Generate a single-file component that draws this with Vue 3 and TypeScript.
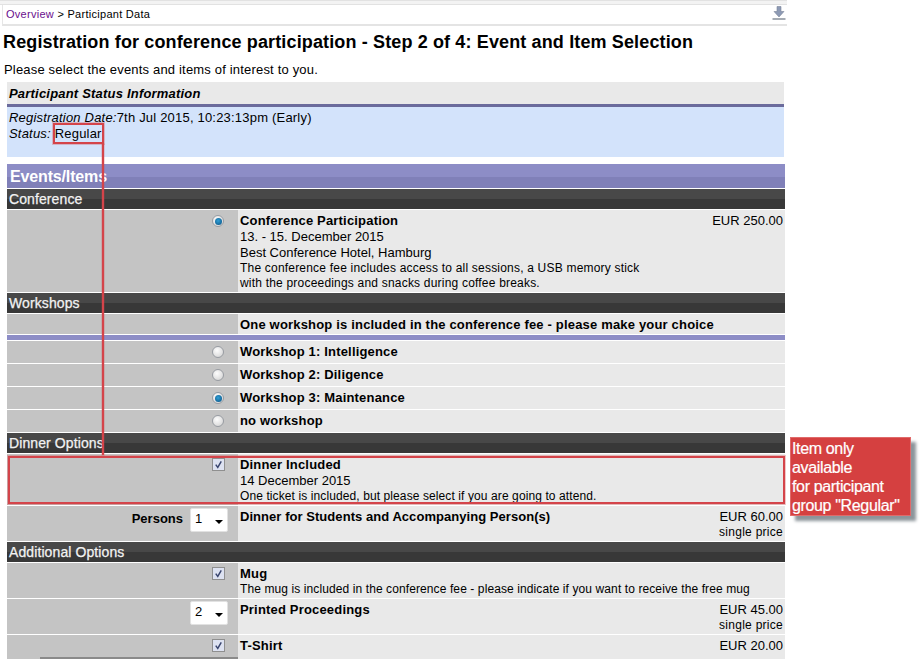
<script setup lang="ts">
const workshops = [
  { name: 'Workshop 1: Intelligence', on: false },
  { name: 'Workshop 2: Diligence', on: false },
  { name: 'Workshop 3: Maintenance', on: true },
  { name: 'no workshop', on: false },
]
</script>

<template>
  <div class="page">
    <div class="tabstrip"></div>
    <div class="crumbs">
      <span><a class="link">Overview</a> &gt; Participant Data</span>
      <svg class="dl" width="14" height="14" viewBox="0 0 14 14">
        <path d="M5 0.5h4v5h3l-5 5.5-5-5.5h3z" fill="#8d9ab5" stroke="#7a8499" stroke-width="0.6" />
        <path d="M0.5 13h13" stroke="#7f8793" stroke-width="1.4" />
      </svg>
    </div>
    <h1>Registration for conference participation - Step 2 of 4: Event and Item Selection</h1>
    <p class="intro">Please select the events and items of interest to you.</p>

    <main class="content">
      <section class="status">
        <div class="status-head">Participant Status Information</div>
        <div class="status-body">
          <div><i>Registration Date:</i>7th Jul 2015, 10:23:13pm (Early)</div>
          <div><i>Status:</i> Regular</div>
        </div>
      </section>

      <div class="events-bar">Events/Items</div>

      <div class="band">Conference</div>
      <div class="row r-conf">
        <div class="ctl"><span class="radio on"></span></div>
        <div class="info">
          <div class="top"><b>Conference Participation</b><span class="price">EUR 250.00</span></div>
          <div class="m">13. - 15. December 2015</div>
          <div class="m">Best Conference Hotel, Hamburg</div>
          <div class="s wide">The conference fee includes access to all sessions, a USB memory stick</div>
          <div class="s wide">with the proceedings and snacks during coffee breaks.</div>
        </div>
      </div>

      <div class="band">Workshops</div>
      <div class="row r-note">
        <div class="ctl"></div>
        <div class="info center"><b>One workshop is included in the conference fee - please make your choice</b></div>
      </div>
      <div class="divider"></div>
      <div v-for="w in workshops" :key="w.name" class="row r-ws">
        <div class="ctl"><span class="radio" :class="{ on: w.on }"></span></div>
        <div class="info center"><b>{{ w.name }}</b></div>
      </div>

      <div class="band">Dinner Options</div>
      <div class="row r-dinner">
        <div class="ctl"><span class="check"><svg viewBox="0 0 12 12" width="11" height="11"><path d="M3 6.2l2.2 3L9 2.5" fill="none" stroke="#39456f" stroke-width="1.6" /></svg></span></div>
        <div class="info">
          <div class="top"><b>Dinner Included</b></div>
          <div class="m">14 December 2015</div>
          <div class="s">One ticket is included, but please select if you are going to attend.</div>
        </div>
      </div>
      <div class="row r-qty">
        <div class="ctl sel"><b class="persons">Persons</b><span class="select">1<i class="caret"></i></span></div>
        <div class="info">
          <div class="top"><b class="tight">Dinner for Students and Accompanying Person(s)</b><span class="price">EUR 60.00</span></div>
          <div class="unit">single price</div>
        </div>
      </div>

      <div class="band">Additional Options</div>
      <div class="row r-qty">
        <div class="ctl"><span class="check"><svg viewBox="0 0 12 12" width="11" height="11"><path d="M3 6.2l2.2 3L9 2.5" fill="none" stroke="#39456f" stroke-width="1.6" /></svg></span></div>
        <div class="info">
          <div class="top"><b>Mug</b></div>
          <div class="s">The mug is included in the conference fee - please indicate if you want to receive the free mug</div>
        </div>
      </div>
      <div class="row r-qty">
        <div class="ctl sel"><span class="select">2<i class="caret"></i></span></div>
        <div class="info">
          <div class="top"><b>Printed Proceedings</b><span class="price">EUR 45.00</span></div>
          <div class="unit">single price</div>
        </div>
      </div>
      <div class="row r-last">
        <div class="ctl"><span class="check"><svg viewBox="0 0 12 12" width="11" height="11"><path d="M3 6.2l2.2 3L9 2.5" fill="none" stroke="#39456f" stroke-width="1.6" /></svg></span><span class="strip"></span></div>
        <div class="info">
          <div class="top"><b>T-Shirt</b><span class="price">EUR 20.00</span></div>
        </div>
      </div>
    </main>

    <div class="mark mark-status"></div>
    <div class="mark-line"></div>
    <div class="mark mark-dinner"></div>
    <div class="note">Item only<br />available<br />for participant<br />group "Regular"</div>
  </div>
</template>

<style>
html, body { margin: 0; background: #fff; }
</style>

<style scoped>
.page {
  position: relative;
  width: 920px;
  height: 659px;
  overflow: hidden;
  background: #fff;
  color: #000;
  font-family: "Liberation Sans", Arial, sans-serif;
  font-size: 13px;
}
.tabstrip {
  width: 787px;
  height: 5px;
  box-sizing: border-box;
  background: #f3f3f3;
  border-top: 1px solid #e2e2e2;
  border-bottom: 1px solid #e2e2e2;
}
.crumbs {
  box-sizing: border-box;
  width: 785px;
  margin-left: 2px;
  height: 21px;
  display: flex;
  align-items: center;
  justify-content: space-between;
  padding: 0 1px 1px 3px;
  border-left: 1px solid #e6e6e6;
  border-bottom: 2px solid #e4e4e4;
  font-size: 11px;
  letter-spacing: 0.28px;
}
.link { color: #6a0f8e; }
.dl { margin-top: -2px; }
h1 {
  margin: 6px 0 0 3px;
  font-size: 18px;
  line-height: 21px;
  font-weight: bold;
  letter-spacing: 0.135px;
}
.intro {
  margin: 9px 0 0 4px;
  font-size: 13px;
  line-height: 16px;
  letter-spacing: 0.18px;
}
.content {
  width: 778px;
  margin: 4px 0 0 7px;
}
.status { width: 777px; }
.status-head {
  height: 22px;
  line-height: 23px;
  padding-left: 2px;
  background: #e9e9e9;
  font-weight: bold;
  font-style: italic;
  font-size: 13px;
  letter-spacing: 0.2px;
  border-bottom: 3px solid #6b6b9c;
}
.status-body {
  height: 47px;
  padding: 3px 0 0 2px;
  background: #d3e3fb;
  line-height: 16px;
  font-size: 13px;
  letter-spacing: 0.2px;
}
.events-bar {
  height: 24px;
  margin-top: 7px;
  padding-left: 3px;
  background: linear-gradient(#8d8dc6 0 13px, #8080b8 13px);
  color: #fff;
  font-size: 16px;
  font-weight: bold;
  line-height: 25px;
  letter-spacing: -0.15px;
}
.band {
  height: 20px;
  margin-top: 1px;
  padding-left: 2px;
  background: linear-gradient(#484848 0 10px, #383838 10px);
  color: #f2f2f2;
  font-size: 14px;
  line-height: 20px;
  letter-spacing: 0.1px;
  -webkit-text-stroke: 0.25px #f2f2f2;
}
.row {
  display: grid;
  grid-template-columns: 231px 1fr;
  margin-top: 1px;
}
.ctl {
  position: relative;
  display: flex;
  justify-content: flex-end;
  align-items: flex-start;
  padding-right: 14px;
  background: #c4c4c4;
}
.ctl.sel { padding-right: 10px; align-items: flex-start; }
.info {
  background: #e9e9e9;
  padding: 3px 2px 0 2px;
}
.info.center { padding-top: 0; display: flex; align-items: center; }
.r-ws .info.center { padding-bottom: 2px; }
.info b { font-size: 13px; letter-spacing: 0.18px; }
.info b.tight { letter-spacing: 0.05px; }
.top {
  display: flex;
  justify-content: space-between;
  line-height: 16px;
}
.price { font-size: 13px; }
.m { font-size: 13px; line-height: 16px; }
.s { font-size: 12px; line-height: 15px; letter-spacing: 0.1px; }
.s.wide { letter-spacing: 0.2px; }
.unit { font-size: 12px; line-height: 15px; letter-spacing: 0.27px; text-align: right; }
.r-conf { height: 82px; }
.r-note { height: 20px; margin-bottom: 1px; }
.r-ws { height: 22px; }
.r-dinner { height: 51px; }
.r-qty { height: 35px; }
.r-last { height: 24px; }
.divider { height: 5px; background: #8d8dc6; }
.radio {
  box-sizing: border-box;
  width: 12px;
  height: 12px;
  margin: 5px 0 0;
  border-radius: 50%;
  border: 1px solid #989ca2;
  background: radial-gradient(circle at 40% 35%, #fdfdfd, #cfcfcf);
  position: relative;
}
.radio.on::after {
  content: "";
  position: absolute;
  inset: 1.5px;
  border-radius: 50%;
  background: radial-gradient(circle at 45% 40%, #2f9fd6, #0a4f80);
}
.check {
  box-sizing: border-box;
  width: 13px;
  height: 13px;
  margin-top: 4px;
  border: 1px solid #8f8f8f;
  background: #dde2f1;
  display: flex;
  align-items: center;
  justify-content: center;
  margin-right: -1px;
}
.check svg { display: block; }
.persons { font-size: 13px; margin: 5px 7px 0 0; line-height: 16px; }
.select {
  position: relative;
  box-sizing: border-box;
  width: 38px;
  height: 24px;
  margin-top: 2px;
  padding-left: 4px;
  background: #fff;
  border: 1px solid #e2e2e2;
  border-radius: 2px;
  font-size: 13px;
  line-height: 20px;
}
.caret {
  position: absolute;
  right: 4px;
  top: 11px;
  width: 0;
  height: 0;
  border-left: 4px solid transparent;
  border-right: 4px solid transparent;
  border-top: 4px solid #000;
}
.strip {
  position: absolute;
  left: 33px;
  right: 0;
  bottom: 0;
  height: 2px;
  background: #8a8a8a;
}
.mark {
  position: absolute;
  box-sizing: border-box;
  border: 2px solid #d4444a;
  box-shadow: 0 0 0 1px rgba(212, 68, 74, 0.3);
}
.mark-status { left: 53px; top: 123px; width: 51px; height: 21px; }
.mark-line {
  position: absolute;
  left: 102px;
  top: 144px;
  width: 2px;
  height: 311px;
  background: #d4444a;
  box-shadow: 0 0 0 0.5px rgba(212, 68, 74, 0.4);
}
.mark-dinner { left: 8px; top: 456px; width: 777px; height: 48px; }
.note {
  position: absolute;
  left: 790px;
  top: 437px;
  box-sizing: border-box;
  width: 121px;
  height: 79px;
  padding: 1px 0 0 1px;
  background: #d54040;
  border: 1px solid #e06a6a;
  box-shadow: 5px 5px 3px #8d959b;
  color: #fff;
  font-size: 16px;
  line-height: 19px;
  letter-spacing: -0.35px;
  -webkit-text-stroke: 0.2px #fff;
}
</style>
